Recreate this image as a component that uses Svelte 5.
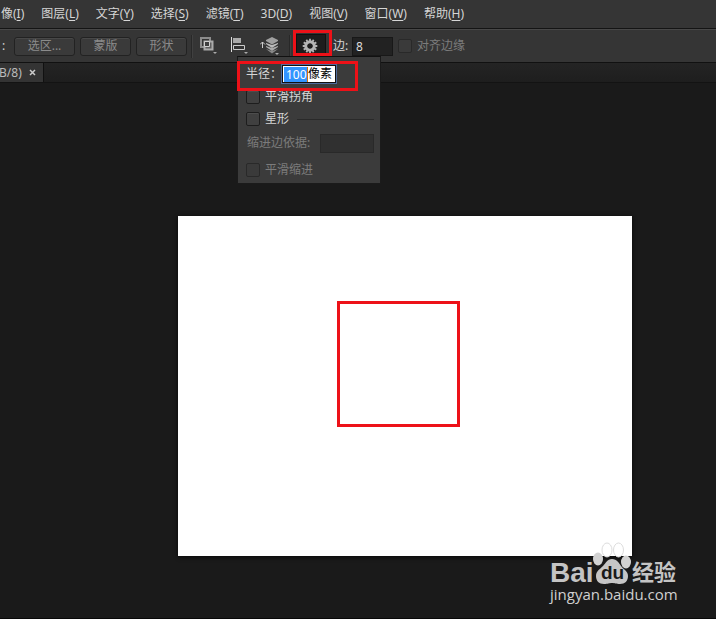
<script>
  const menus = [
    ['像', 'I'], ['图层', 'L'], ['文字', 'Y'], ['选择', 'S'], ['滤镜', 'T'],
    ['3D', 'D'], ['视图', 'V'], ['窗口', 'W'], ['帮助', 'H'],
  ];
  let sides = $state('8');
  let radius = $state('像素');
</script>

<div class="app">
  <nav class="menubar">
    {#each menus as [name, key]}
      <button class="menu">{name}(<u>{key}</u>)</button>
    {/each}
  </nav>

  <div class="options">
    <span class="colon">:</span>
    <button class="make">选区...</button>
    <button class="make short">蒙版</button>
    <button class="make short">形状</button>
    <i class="divider"></i>
    <button class="tool" aria-label="路径操作">
      <svg width="18" height="18" viewBox="0 0 18 18" fill="none">
        <path d="M1 1h9v9H1z" stroke="#8c8c8c" stroke-width="2" />
        <path d="M4.500 4.500h8v8h-8z" fill="#5e5e5e" stroke="#aaa" stroke-width="2" />
        <path d="M4.500 4.500h5v5h-5z" fill="#3d3d3d" stroke="#d0d0d0" />
        <path d="M13 15h4l-2 2z" fill="#aaa" />
      </svg>
    </button>
    <button class="tool" aria-label="路径对齐方式">
      <svg width="18" height="18" viewBox="0 0 18 18" fill="none">
        <path d="M.5 0v15" stroke="#ddd" />
        <path d="M2 1h8v5H2z" fill="#aaa" />
        <path d="M2.500 8.500h11v4h-11z" fill="#333" stroke="#ccc" />
        <path d="M13 15h4l-2 2z" fill="#aaa" />
      </svg>
    </button>
    <button class="tool stack" aria-label="路径排列方式">
      <svg width="21" height="19" viewBox="0 0 21 19">
        <path d="M2.500 11V5M0 7.500 2.500 5 5 7.500" fill="none" stroke="#ccc" />
        <path d="m6 12 6 2 6-2-6 4.500z" fill="#888" />
        <path d="m6 9 6 2 6-2v1l-6 4-6-4z" fill="#aaa" />
        <path d="m6 6 6 2 6-2v1l-6 4-6-4z" fill="#bbb" />
        <path d="m12 0 6 3v1l-6 3.500L6 4V3z" fill="#a0a0a0" />
        <path d="M15 16h4l-2 2z" fill="#aaa" />
      </svg>
    </button>
    <i class="divider second"></i>
    <div class="gear-wrap">
      <button class="gear" aria-label="几何选项">
        <svg width="16" height="16" viewBox="-8 -8 16 16">
          {#each [0, 30, 60, 90, 120, 150] as angle}
            <path d="M-.9-7.300h1.800V-3h-1.800zM-.9 3h1.800v4.300h-1.800z" fill="#b4b4b4" transform="rotate({angle})" />
          {/each}
          <circle r="4.300" fill="none" stroke="#b4b4b4" stroke-width="3" />
        </svg>
      </button>
      <i class="mark gear-mark"></i>
      <div class="popup">
        <div class="radius">
          <label for="radius">半径：</label>
          <div class="radius-box">
            <span class="selected">100</span><input id="radius" bind:value={radius} />
          </div>
          <i class="mark radius-mark"></i>
        </div>
        <label class="check"><input type="checkbox" />平滑拐角</label>
        <label class="check"><input type="checkbox" />星形<i class="rule"></i></label>
        <div class="indent">
          <label for="indent">缩进边依据:</label>
          <input id="indent" disabled />
        </div>
        <label class="check off"><input type="checkbox" disabled />平滑缩进</label>
      </div>
    </div>
    <label class="sides-label" for="sides">边:</label>
    <input id="sides" class="sides" bind:value={sides} />
    <label class="check off snap"><input type="checkbox" disabled />对齐边缘</label>
  </div>

  <div class="tabs">
    <div class="tab">
      <span>B/8)</span>
      <button aria-label="关闭">
        <svg width="7" height="7" viewBox="0 0 7 7"><path d="m1 1 5 5M6 1 1 6" stroke="#ccc" stroke-width="1.500" /></svg>
      </button>
    </div>
  </div>

  <main>
    <div class="canvas"><i class="square"></i></div>
    <div class="watermark">
      <div class="brand">
        <span class="latin">Bai</span>
        <span class="paw">
          <svg width="40" height="44" viewBox="0 0 40 44">
            <ellipse cx="14" cy="8" rx="5" ry="7" fill="#fff" stroke="#ddd" />
            <ellipse cx="25.500" cy="8" rx="5" ry="7" fill="#fff" stroke="#ddd" />
            <ellipse cx="5" cy="17" rx="5" ry="6.500" fill="#d2d2d2" />
            <ellipse cx="33" cy="20" rx="5" ry="6.500" fill="#d2d2d2" />
            <path d="M19 17c5 0 7 4 9 7s7 5 7 10-3 8-8 8c-4 0-5-1-8-1s-4 1-8 1c-5 0-8-3-8-8s4-7 7-10 4-7 9-7z" fill="#c6c6c6" />
          </svg>
          <b>du</b>
        </span>
        <span class="cjk">经验</span>
      </div>
      <div class="site">jingyan.baidu.com</div>
    </div>
  </main>
</div>

<style>
  :global(body) { background: #1a1a1a; }
  * { box-sizing: border-box; }
  .app {
    min-height: 100vh;
    display: flex;
    flex-direction: column;
    overflow: hidden;
    background: #1a1a1a;
    border-bottom: 1px solid #080808;
    color: #d6d6d6;
    font: 12px/16px "Noto Sans", "Noto Sans CJK SC", sans-serif;
  }
  button, input { font: inherit; color: inherit; margin: 0; padding: 0; border: 0; background: none; border-radius: 0; }
  button { white-space: nowrap; }
  svg { display: block; }
  .menubar {
    height: 29px;
    display: flex;
    align-items: center;
    gap: 17px;
    padding-left: 1px;
    background: #353535;
    border-bottom: 1px solid #141414;
  }
  u { text-underline-offset: 2px; }
  .options {
    height: 34px;
    display: flex;
    align-items: center;
    background: #353535;
    border-top: 1px solid #484848;
    border-bottom: 1px solid #111;
  }
  .colon { width: 14px; padding-left: 2px; }
  .make {
    width: 61px;
    height: 19px;
    margin-right: 5px;
    color: #8b8b8b;
    background: #3a3a3a;
    border: 1px solid #222;
    border-radius: 3px;
    box-shadow: inset 0 1px #484848;
    line-height: 16px;
  }
  .short { width: 51px; }
  .divider { width: 2px; height: 23px; background: #282828; border-right: 1px solid #404040; margin-right: 7px; margin-left: -1px; }
  .tool { width: 31px; }
  .second { margin-left: 0; margin-right: 2px; }
  .stack { width: 29px; margin-left: -2px; }
  .gear-wrap { position: relative; width: 39px; }
  .gear { width: 30px; height: 24px; margin-left: 3px; padding-left: 5px; display: block; background: #1d1d1d; border: 1px solid #111; }
  .mark { position: absolute; border: 3px solid #ed1118; pointer-events: none; }
  .gear-mark { left: 0; top: -4px; width: 39px; height: 26px; z-index: 3; }
  .popup {
    position: absolute;
    z-index: 2;
    left: -56px;
    top: 22px;
    width: 144px;
    padding: 5px 6px 0 8px;
    background: #3b3b3b;
    border: 1px solid #1b1b1b;
    border-top-color: #111;
  }
  .radius { position: relative; display: flex; align-items: center; height: 24px; }
  .radius label { width: 35px; white-space: nowrap; }
  .radius-box { display: flex; align-items: center; width: 56px; height: 20px; padding: 1px; border: 1px solid #4e6b9e; background: #fff; color: #000; outline: 1px solid #111; outline-offset: -2px; }
  .selected { background: #3294ff; color: #fff; border-right: 1px solid #d07010; width: 24px; height: 15px; padding-left: 2px; line-height: 15px; margin-left: 1px; }
  .radius-box input { flex: 1; min-width: 0; height: 14px; outline: 0; }
  .radius-mark { left: -9px; top: -1px; width: 121px; height: 30px; }
  .check { display: flex; align-items: center; height: 22px; white-space: nowrap; }
  .check input {
    appearance: none;
    width: 14px;
    height: 14px;
    margin-right: 5px;
    background: #404040;
    border: 1px solid #1d1d1d;
    border-radius: 2px;
    box-shadow: inset 0 1px #4d4d4d;
  }
  .rule { flex: 1; height: 1px; margin-left: 8px; background: #292929; }
  .indent { display: flex; align-items: center; justify-content: space-between; height: 26px; color: #7c7c7c; }
  .indent label { padding-left: 1px; white-space: nowrap; }
  .indent input { width: 54px; height: 19px; background: #303030; border: 1px solid #292929; }
  .off { color: #7c7c7c; }
  .off input { border-color: #292929; background: #3a3a3a; box-shadow: none; }
  .popup .off { height: 27px; }
  .sides-label { width: 20px; padding-left: 1px; }
  .sides { width: 41px; height: 19px; padding-left: 3px; background: #222; border: 1px solid #181818; outline: 0; color: #ddd; }
  .snap { margin-left: 5px; }
  .tabs { height: 20px; background: linear-gradient(#242424, #1e1e1e); border-bottom: 1px solid #131313; }
  .tab { width: 44px; height: 19px; display: flex; align-items: center; gap: 7px; background: #343434; border-right: 1px solid #111; color: #bbb; }
  .tab span { margin-left: -1px; }
  main { flex: 1; position: relative; padding: 133px 84px 62px 178px; }
  .canvas { aspect-ratio: 454 / 340; position: relative; background: #fff; box-shadow: 0 1px 4px #080808; }
  .square { position: absolute; left: 35%; top: 25%; width: 123px; aspect-ratio: 123 / 126; border: 3px solid #ed1118; }
  .watermark { position: absolute; right: 38px; bottom: 16px; width: 128px; color: #d0d0d0; }
  .brand { display: flex; height: 44px; }
  .latin { width: 43px; padding-top: 15px; font: bold 28px/32px "Liberation Sans", sans-serif; color: #c4c4c4; }
  .paw { position: relative; width: 39px; height: 44px; }
  .paw b { position: absolute; left: 8px; bottom: 2px; font: bold 19px/22px "Liberation Sans", sans-serif; color: #1a1a1a; }
  .cjk { padding-top: 15px; font: bold 22px/26px "Noto Sans CJK SC", sans-serif; color: #c4c4c4; white-space: nowrap; }
  .site { font: 15px/16px "Open Sans", sans-serif; white-space: nowrap; }
</style>
